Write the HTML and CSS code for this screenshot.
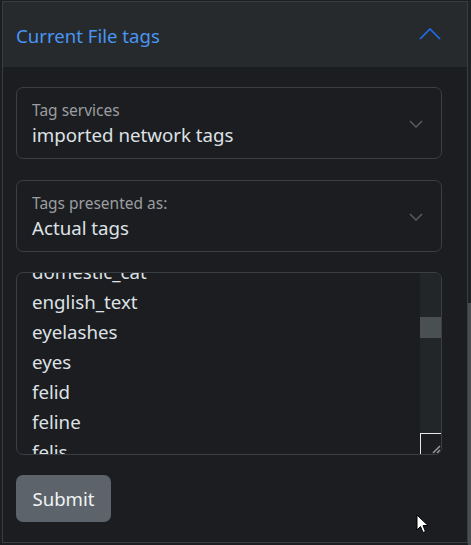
FILE: index.html
```html
<!DOCTYPE html>
<html>
<head>
<meta charset="utf-8">
<link rel="stylesheet" href="styles.css">
</head>
<body>
<div class="page">
  <div class="card">
    <div class="header">
      <span class="title">Current File tags</span>
      <svg class="chev-up" width="22" height="12" viewBox="0 0 22 12"><path d="M1 11 L11 1 L21 11" fill="none" stroke="#1c6ee6" stroke-width="1.7"/></svg>
    </div>
    <div class="body">
      <div class="select">
        <div class="sel-text">
          <div class="sel-label">Tag services</div>
          <div class="sel-value">imported network tags</div>
        </div>
        <svg class="chev-down" width="14" height="8" viewBox="0 0 14 8"><path d="M1 1 L7 7 L13 1" fill="none" stroke="#55595d" stroke-width="1.6"/></svg>
      </div>
      <div class="select">
        <div class="sel-text">
          <div class="sel-label">Tags presented as:</div>
          <div class="sel-value">Actual tags</div>
        </div>
        <svg class="chev-down" width="14" height="8" viewBox="0 0 14 8"><path d="M1 1 L7 7 L13 1" fill="none" stroke="#55595d" stroke-width="1.6"/></svg>
      </div>
      <div class="textarea">
        <div class="lines">
          <div class="line">domestic_cat</div>
          <div class="line">english_text</div>
          <div class="line">eyelashes</div>
          <div class="line">eyes</div>
          <div class="line">felid</div>
          <div class="line">feline</div>
          <div class="line">felis</div>
        </div>
        <div class="vscroll">
          <div class="track">
            <div class="thumb"></div>
          </div>
          <div class="resizer">
            <svg width="10" height="10" viewBox="0 0 10 10"><path d="M2 9 L9 2 M6 9 L9 6" stroke="#9a9a9a" stroke-width="1.5"/></svg>
          </div>
        </div>
      </div>
      <div class="actions"><button class="btn">Submit</button></div>
    </div>
  </div>
  <div class="page-scroll"><div class="page-thumb"></div></div>
  <svg class="cursor" width="13" height="20" viewBox="0 0 13 20"><path d="M1 1 L1 16 L4.5 12.5 L7 18.5 L9.5 17.5 L7 11.5 L12 11.5 Z" fill="#fff" stroke="#000" stroke-width="1"/></svg>
</div>
</body>
</html>
```

FILE: styles.css
```css
html, body {
  margin: 0;
  padding: 0;
  background: #1c1d20;
  font-family: "Noto Sans", "Open Sans", sans-serif;
}
.page {
  position: relative;
  display: flex;
  width: 471px;
  height: 545px;
  overflow: hidden;
}
.card {
  margin: 1px 0 0 2px;
  width: 466px;
  height: 542px;
  box-sizing: border-box;
  border: 1px solid #3a3d40;
  background: #1c1d20;
  display: flex;
  flex-direction: column;
}
.header {
  height: 65px;
  background: #272a2d;
  display: flex;
  align-items: center;
  justify-content: space-between;
  padding: 0 26px 0 13px;
  flex-shrink: 0;
}
.title {
  color: #4795f4;
  font-size: 18.6px;
  padding-top: 2px;
}
.chev-up {
  margin-top: -2px;
}
.body {
  padding: 20px 25px 0 13px;
  display: flex;
  flex-direction: column;
}
.select {
  height: 72px;
  box-sizing: border-box;
  border: 1px solid #3b3e42;
  border-radius: 7px;
  display: flex;
  align-items: center;
  justify-content: space-between;
  padding: 0 18px 0 15px;
  margin-bottom: 21px;
}
.sel-text {
  display: flex;
  flex-direction: column;
  margin-top: 2px;
}
.sel-label {
  color: #9a9da1;
  font-size: 15.5px;
  line-height: 22px;
}
.sel-value {
  color: #dee2e6;
  font-size: 18.7px;
  line-height: 28px;
}
.chev-down {
  margin-top: 2px;
}
.textarea {
  height: 183px;
  margin-top: -1px;
  box-sizing: border-box;
  border: 1px solid #3b3e42;
  border-radius: 7px;
  display: flex;
  overflow: hidden;
}
.lines {
  flex: 1;
  padding-left: 15px;
  margin-top: -16px;
}
.line {
  color: #dee2e6;
  font-size: 18.7px;
  line-height: 30px;
}
.vscroll {
  width: 21px;
  display: flex;
  flex-direction: column;
}
.track {
  flex: 1;
  background: #232628;
  padding-top: 44px;
}
.thumb {
  height: 21px;
  background: #4a4f52;
}
.resizer {
  height: 21px;
  box-sizing: border-box;
  border-left: 1px solid #e8e8e8;
  border-top: 1px solid #e8e8e8;
  background: #1c1d20;
  display: flex;
  align-items: flex-end;
  justify-content: flex-end;
}
.resizer svg {
  display: block;
}
.actions {
  padding-top: 20px;
}
.btn {
  height: 47px;
  width: 95px;
  border: none;
  border-radius: 7px;
  background: #5c636a;
  color: #f1f3f5;
  font-family: "Noto Sans", "Open Sans", sans-serif;
  font-size: 18.6px;
  padding: 0;
}
.page-scroll {
  width: 3px;
  margin-left: 0;
  background: #1f2224;
  padding-top: 303px;
}
.page-thumb {
  height: 242px;
  background: #4a4e51;
}
.cursor {
  position: absolute;
  left: 416px;
  top: 514px;
}
```
